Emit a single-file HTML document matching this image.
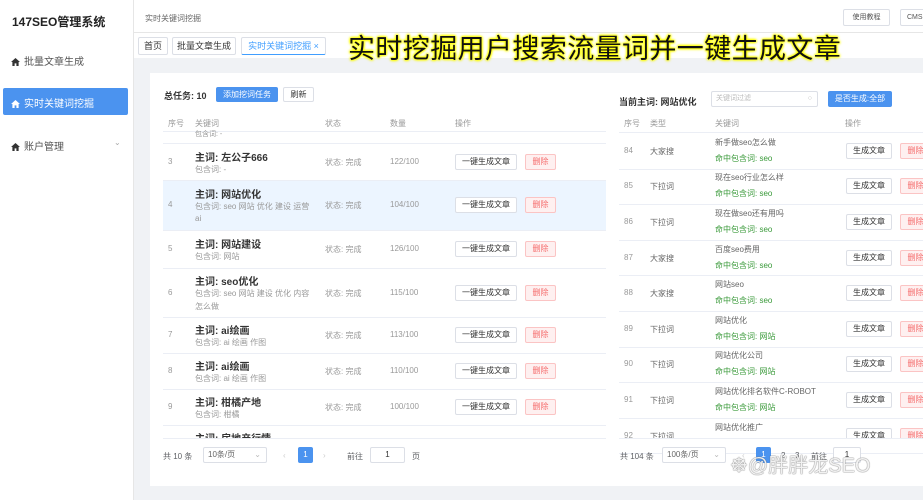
<!DOCTYPE html>
<html><head><meta charset="utf-8"><style>
*{margin:0;padding:0;box-sizing:border-box}
body{width:923px;height:500px;overflow:hidden;background:#fff;font-family:"Liberation Sans","Noto Sans CJK SC",sans-serif;color:#606266;position:relative;font-size:8px}
.a{position:absolute;white-space:nowrap}
.side{left:0;top:0;width:134px;height:500px;background:#fff;border-right:1px solid #e6e6e6}
.main{left:134px;top:58px;width:789px;height:442px;background:#f0f2f5}
.card{left:150px;top:73px;width:773px;height:413px;background:#fff}
.btn{position:absolute;border:1px solid #dcdfe6;border-radius:2px;background:#fff;color:#333;font-size:8px;text-align:center}
.del{position:absolute;border:1px solid #fbc4c4;background:#fef0f0;color:#f56c6c;border-radius:2px;font-size:8px;text-align:center}
.hl{position:absolute;height:1px;background:#ebeef5}
.t{color:#333;font-size:10px;font-weight:bold}
.g{color:#999;font-size:8px}
.grn{color:#3a9a3a;font-size:8px}
.ico{display:inline-block;width:9px;height:8px;vertical-align:-1px;margin-right:4px}
</style></head><body>
<div class="a side"></div>
<div class="a" style="left:12px;top:13px;font-size:12px;font-weight:bold;color:#222">147SEO管理系统</div>
<div class="a" style="left:11px;top:53px;font-size:10px;color:#555"><svg class="ico" viewBox="0 0 10 9"><path d="M5 0L0 4.5H1.5V9H4V6H6V9H8.5V4.5H10Z" fill="#333"/></svg>批量文章生成</div>
<div class="a" style="left:3px;top:88px;width:125px;height:27px;background:#4b93ef;border-radius:2px"></div>
<div class="a" style="left:11px;top:95px;font-size:10px;color:#fff"><svg class="ico" viewBox="0 0 10 9"><path d="M5 0L0 4.5H1.5V9H4V6H6V9H8.5V4.5H10Z" fill="#fff"/></svg>实时关键词挖掘</div>
<div class="a" style="left:11px;top:138px;font-size:10px;color:#555"><svg class="ico" viewBox="0 0 10 9"><path d="M5 0L0 4.5H1.5V9H4V6H6V9H8.5V4.5H10Z" fill="#333"/></svg>账户管理</div>
<div class="a" style="left:114px;top:138px;font-size:8px;color:#aaa">⌄</div>

<div class="a" style="left:134px;top:0;width:789px;height:33px;border-bottom:1px solid #e6e6e6"></div>
<div class="a" style="left:145px;top:13px;font-size:8px;color:#666">实时关键词挖掘</div>
<div class="btn" style="left:843px;top:9px;width:47px;height:17px;line-height:15px;font-size:7px;color:#555">使用教程</div>
<div class="btn" style="left:900px;top:9px;width:40px;height:17px;line-height:15px;font-size:7px;color:#555;text-align:left;padding-left:6px">CMS</div>
<div class="btn" style="left:138px;top:37px;width:30px;height:18px;line-height:16px;font-size:9px;color:#333">首页</div>
<div class="btn" style="left:172px;top:37px;width:64px;height:18px;line-height:16px;font-size:9px;color:#333">批量文章生成</div>
<div class="btn" style="left:241px;top:37px;width:85px;height:18px;line-height:16px;font-size:9px;color:#409eff;border-bottom:1px solid #409eff">实时关键词挖掘 ×</div>

<div class="a main"></div>
<div class="a" style="left:348px;top:27px;font-size:27px;color:#111;text-shadow:0 0 2px #ff0,0 0 2px #ff0,0 0 3px #ff0,0 0 3px #ff0;letter-spacing:0.4px;z-index:5">实时挖掘用户搜索流量词并一键生成文章</div>
<div class="a card"></div>
<!-- left -->
<div class="a" style="left:164px;top:89px;font-size:9px;color:#333;font-weight:bold">总任务: 10</div>
<div class="a" style="left:216px;top:87px;width:62px;height:15px;background:#4b93ef;border-radius:2px;color:#fff;font-size:8px;text-align:center;line-height:15px">添加挖词任务</div>
<div class="btn" style="left:283px;top:87px;width:31px;height:15px;line-height:13px">刷新</div>
<div class="a g" style="left:168px;top:118px">序号</div><div class="a g" style="left:195px;top:118px">关键词</div><div class="a g" style="left:325px;top:118px">状态</div><div class="a g" style="left:390px;top:118px">数量</div><div class="a g" style="left:455px;top:118px">操作</div>
<div class="hl" style="left:163px;top:131px;width:443px"></div>
<div class="a g" style="left:195px;top:129px;font-size:7px">包含词: -</div>
<div class="hl" style="left:163px;top:143px;width:443px"></div>
<div class="a" style="left:163px;top:180px;width:443px;height:50px;background:#ecf5ff"></div>
<div id="L"></div>
<div class="a" style="left:163px;top:438px;width:443px;height:1px;background:#ebeef5"></div>
<div class="a" style="left:163px;top:451px;font-size:8px">共 10 条</div>
<div class="btn" style="left:203px;top:447px;width:64px;height:16px;line-height:14px;text-align:left;padding-left:4px;color:#666">10条/页<span style="float:right;margin-right:5px;color:#bbb">⌄</span></div>
<div class="a" style="left:283px;top:451px;color:#ccc">‹</div>
<div class="a" style="left:298px;top:447px;width:15px;height:16px;background:#4b93ef;color:#fff;text-align:center;line-height:16px;border-radius:2px">1</div>
<div class="a" style="left:323px;top:451px;color:#ccc">›</div>
<div class="a" style="left:347px;top:451px">前往</div>
<div class="btn" style="left:370px;top:447px;width:35px;height:16px;line-height:14px">1</div>
<div class="a" style="left:412px;top:451px">页</div>
<!-- right -->
<div class="a" style="left:619px;top:95px;font-size:9px;color:#333;font-weight:bold">当前主词: 网站优化</div>
<div class="btn" style="left:711px;top:91px;width:107px;height:16px;line-height:14px;text-align:left;padding-left:4px;color:#bbb;font-size:7px">关键词过滤<span style="float:right;margin-right:5px">○</span></div>
<div class="a" style="left:828px;top:91px;width:64px;height:16px;background:#4b93ef;border-radius:2px;color:#fff;font-size:8px;text-align:center;line-height:16px">是否生成:全部</div>
<div class="a g" style="left:624px;top:118px">序号</div><div class="a g" style="left:650px;top:118px">类型</div><div class="a g" style="left:715px;top:118px">关键词</div><div class="a g" style="left:845px;top:118px">操作</div>
<div class="hl" style="left:619px;top:132px;width:304px"></div>
<div id="R"></div>
<div class="a" style="left:619px;top:438px;width:304px;height:1px;background:#ebeef5"></div>
<div class="a" style="left:620px;top:451px">共 104 条</div>
<div class="btn" style="left:662px;top:447px;width:64px;height:16px;line-height:14px;text-align:left;padding-left:4px;color:#666">100条/页<span style="float:right;margin-right:5px;color:#bbb">⌄</span></div>
<div class="a" style="left:742px;top:451px;color:#ccc">‹</div>
<div class="a" style="left:756px;top:447px;width:15px;height:16px;background:#4b93ef;color:#fff;text-align:center;line-height:16px;border-radius:2px">1</div>
<div class="a" style="left:781px;top:451px">2</div><div class="a" style="left:795px;top:451px">3</div>
<div class="a" style="left:811px;top:451px">前往</div>
<div class="btn" style="left:833px;top:447px;width:28px;height:16px;line-height:14px">1</div>
<div class="a" style="left:730px;top:449px;font-size:20px;color:rgba(255,255,255,.9);text-shadow:0 0 1px #777,0 0 1px #777;z-index:5">☸@胖胖龙SEO</div>
<script>
var L=[[3,143,180,"左公子666",["包含词: -"],"122/100"],[4,180,230,"网站优化",["包含词: seo 网站 优化 建设 运营","ai"],"104/100"],[5,230,268,"网站建设",["包含词: 网站"],"126/100"],[6,268,317,"seo优化",["包含词: seo 网站 建设 优化 内容","怎么做"],"115/100"],[7,317,353,"ai绘画",["包含词: ai 绘画 作图"],"113/100"],[8,353,389,"ai绘画",["包含词: ai 绘画 作图"],"110/100"],[9,389,425,"柑橘产地",["包含词: 柑橘"],"100/100"]];
var h="";
L.forEach(function(r){var m=(r[1]+r[2])/2;var n=r[4].length+1;var ty=m-n*6.5;
h+='<div class="a g" style="left:168px;top:'+(m-5)+'px">'+r[0]+'</div>';
h+='<div class="a t" style="left:195px;top:'+ty+'px">主词: '+r[3]+'</div>';
r[4].forEach(function(s,i){h+='<div class="a g" style="left:195px;top:'+(ty+15+i*13)+'px">'+s+'</div>'});
h+='<div class="a g" style="left:325px;top:'+(m-5)+'px">状态: 完成</div><div class="a g" style="left:390px;top:'+(m-5)+'px">'+r[5]+'</div>';
h+='<div class="btn" style="left:455px;top:'+(m-8)+'px;width:62px;height:16px;line-height:14px">一键生成文章</div><div class="del" style="left:525px;top:'+(m-8)+'px;width:31px;height:16px;line-height:14px">删除</div>';
h+='<div class="hl" style="left:163px;top:'+r[2]+'px;width:443px"></div>';});
h+='<div class="a t" style="left:195px;top:430px;height:8px;overflow:hidden">主词: 房地产行情</div>';
document.getElementById("L").outerHTML=h;
var R=[[84,"大家搜","新手做seo怎么做","seo"],[85,"下拉词","现在seo行业怎么样","seo"],[86,"下拉词","现在做seo还有用吗","seo"],[87,"大家搜","百度seo费用","seo"],[88,"大家搜","网站seo","seo"],[89,"下拉词","网站优化","网站"],[90,"下拉词","网站优化公司","网站"],[91,"下拉词","网站优化排名软件C-ROBOT","网站"],[92,"下拉词","网站优化推广","网站"]];
h="";R.forEach(function(r,i){var top=133+i*35.6,m=top+17.8;
h+='<div class="a g" style="left:624px;top:'+(m-5)+'px">'+r[0]+'</div><div class="a g" style="left:650px;top:'+(m-5)+'px;color:#666">'+r[1]+'</div>';
h+='<div class="a g" style="left:715px;top:'+(m-14)+'px;color:#666">'+r[2]+'</div><div class="a grn" style="left:715px;top:'+(m+2)+'px">命中包含词: '+r[3]+'</div>';
h+='<div class="btn" style="left:846px;top:'+(m-8)+'px;width:46px;height:16px;line-height:14px">生成文章</div><div class="del" style="left:900px;top:'+(m-8)+'px;width:31px;height:16px;line-height:14px">删除</div>';
h+='<div class="hl" style="left:619px;top:'+(top+35.6)+'px;width:304px"></div>';});
document.getElementById("R").outerHTML=h;
</script>
<div class="a" style="left:619px;top:439px;width:304px;height:8px;background:#fff"></div>
<div class="a" style="left:163px;top:439px;width:443px;height:8px;background:#fff"></div>
</body></html>
